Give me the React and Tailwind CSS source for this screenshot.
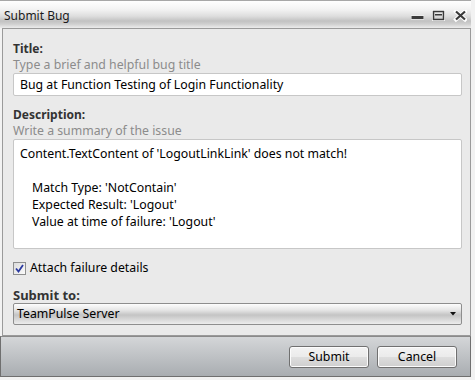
import React, { useState } from 'react';

const font = { fontFamily: '"Noto Sans", "Open Sans", Arial, sans-serif' };

const WindowControls = () => (
  <svg width="56" height="14" viewBox="0 0 56 14" className="shrink-0">
    {/* minimize */}
    <rect x="0" y="5.5" width="13" height="4" fill="#fff" opacity="0.8" />
    <rect x="0.5" y="6" width="12" height="3" fill="#3a3a3a" />
    {/* maximize */}
    <rect x="21.5" y="0.5" width="12" height="10" fill="none" stroke="#fff" strokeWidth="1" />
    <rect x="22.5" y="1.5" width="10" height="8" fill="none" stroke="#3a3a3a" strokeWidth="1.5" />
    <rect x="24" y="4" width="7" height="1.5" fill="#3a3a3a" />
    {/* close */}
    <path d="M45 1.5 L54 9.5 M54 1.5 L45 9.5" stroke="#fff" strokeWidth="4" strokeLinecap="square" />
    <path d="M45 1.5 L54 9.5 M54 1.5 L45 9.5" stroke="#3a3a3a" strokeWidth="2.2" />
  </svg>
);

const CheckBox = ({ checked, onChange }) => (
  <button
    type="button"
    onClick={onChange}
    className="w-[13px] h-[13px] border border-[#8e8f8f] bg-[linear-gradient(to_bottom_right,#dcdcdc,#fbfbfb)] flex items-center justify-center shrink-0"
  >
    {checked && (
      <svg width="9" height="9" viewBox="0 0 9 9">
        <path d="M1 4.5 L3.5 7.5 L8 1" fill="none" stroke="#2b3aa0" strokeWidth="1.8" />
      </svg>
    )}
  </button>
);

const Button = ({ children }) => (
  <button
    type="button"
    className="w-[80px] h-[22px] rounded-[3px] border border-[#707070] text-[12.3px] leading-[16px] text-black bg-[linear-gradient(to_bottom,#f3f3f3_0%,#ebebeb_48%,#dddddd_52%,#cfcfcf_100%)] shadow-[inset_0_0_0_1px_#fcfcfc]"
  >
    {children}
  </button>
);

export default function App() {
  const [attach, setAttach] = useState(true);

  return (
    <div className="w-[475px] h-[380px] bg-[#f2f2f2] text-black" style={font}>
      <div className="w-[471px] h-[377px] flex flex-col">
        {/* title bar */}
        <div className="h-[28px] flex items-center justify-between pl-[4px] pr-[4px] border-t border-[#a8a8a8] bg-[linear-gradient(to_bottom,#ffffff_0px,#f4f4f4_8px,#dedede_15px,#c2c2c2_20px,#cfcfcf_23px,#ececec_27px)]">
          <span className="text-[12px] leading-[16px] pt-[3px] text-[#1a1a1a]">Submit Bug</span>
          <div className="pt-[4px]">
            <WindowControls />
          </div>
        </div>

        {/* content panel */}
        <div className="ml-[2px] flex-1 border border-[#9a9a9a] bg-[#eaeaea] pt-[12px] pb-[9px] pl-[10px] pr-[8px] flex flex-col">
          <div className="text-[12px] leading-[16px] font-bold text-[#333]">Title:</div>
          <div className="text-[12.3px] leading-[16px] text-[#8c8c8c]">Type a brief and helpful bug title</div>
          <div className="h-[23px] bg-white border border-[#c7c7c7] rounded-[2px] flex items-center px-[6px] text-[12.3px] leading-[16px]">
            Bug at Function Testing of Login Functionality
          </div>

          <div className="mt-[11px] text-[12px] leading-[16px] font-bold text-[#333]">Description:</div>
          <div className="text-[12.3px] leading-[16px] text-[#8c8c8c]">Write a summary of the issue</div>
          <div className="h-[110px] bg-white border border-[#c7c7c7] rounded-[2px] px-[6px] pt-[5px] text-[12.3px] leading-[17px]">
            <div>Content.TextContent of 'LogoutLinkLink' does not match!</div>
            <div className="h-[17px]" />
            <div className="pl-[12px]">Match Type: 'NotContain'</div>
            <div className="pl-[12px]">Expected Result: 'Logout'</div>
            <div className="pl-[12px]">Value at time of failure: 'Logout'</div>
          </div>

          <div className="mt-[11px] h-[16px] flex items-center gap-[4px]">
            <CheckBox checked={attach} onChange={() => setAttach(!attach)} />
            <span className="text-[12.3px] leading-[16px]">Attach failure details</span>
          </div>

          <div className="mt-[11px] text-[13px] leading-[16px] font-bold text-[#333]">Submit to:</div>
          <div className="h-[22px] rounded-[2px] border border-[#8e8e8e] bg-[linear-gradient(to_bottom,#fdfdfd_0%,#e6e6e6_30%,#c4c4c4_55%,#dadada_80%,#ececec_100%)] flex items-center justify-between pl-[3px] pr-[5px]">
            <span className="text-[12.3px] leading-[16px]">TeamPulse Server</span>
            <svg width="6" height="4" viewBox="0 0 6 4">
              <path d="M0 0 L6 0 L3 3.5 Z" fill="#111" />
            </svg>
          </div>
        </div>

        {/* footer */}
        <div className="h-[41px] border border-[#6f6f6f] border-t-[#8a8a8a] bg-[linear-gradient(to_bottom,#d4d6d8,#a9adb1)] flex items-center justify-end gap-[8px] pr-[13px]">
          <Button>Submit</Button>
          <Button>Cancel</Button>
        </div>
      </div>
    </div>
  );
}
